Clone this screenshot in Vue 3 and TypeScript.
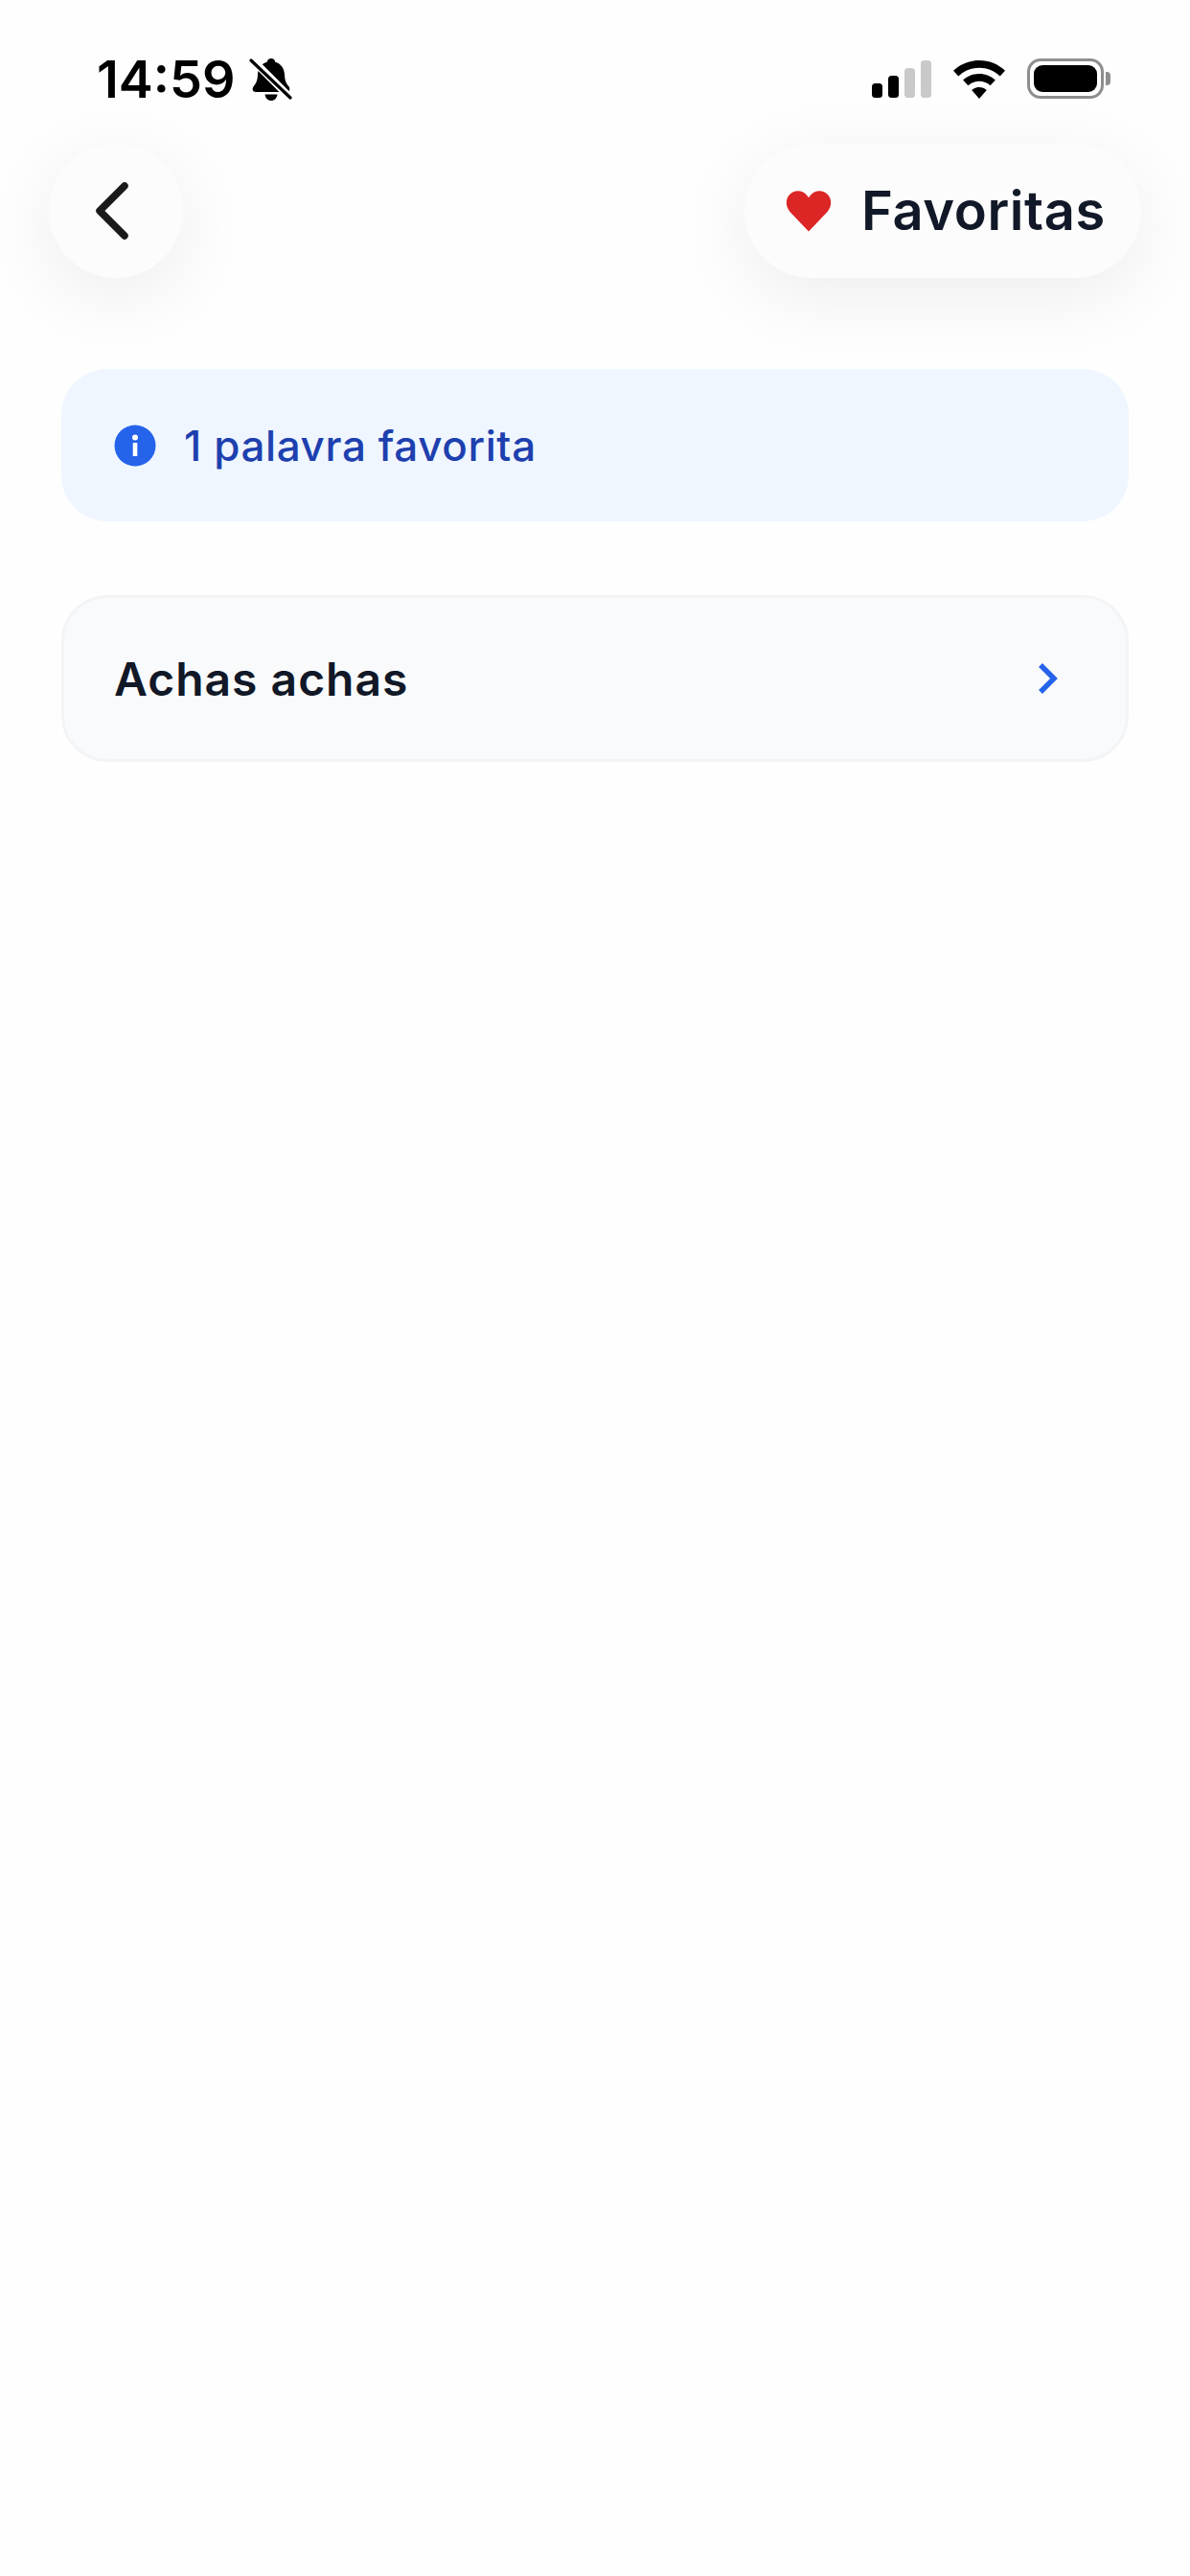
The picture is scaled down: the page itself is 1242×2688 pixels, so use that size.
<template>
  <div class="screen">
    <!-- iOS status bar -->
    <div class="status-bar">
      <div class="status-left">
        <span class="time">14:59</span>
        <svg class="bell" width="46" height="46" viewBox="0 0 46 46">
          <path d="M23 1c2.400 0 4 1.700 4.300 3.800 6 1.700 9.300 6.700 9.700 13 .3 5 .8 8.200 4 12 2.400 2.900 1.600 6.200-2.300 6.200H7.300c-3.900 0-4.700-3.300-2.300-6.200 3.200-3.800 3.700-7 4-12 .4-6.300 3.700-11.300 9.700-13C19 2.700 20.600 1 23 1z" fill="#000" />
          <path d="M16.500 38.500h13c-.4 3.800-3.100 6.500-6.500 6.500s-6.100-2.700-6.500-6.500z" fill="#000" />
          <path d="M3 2l40 40" stroke="#fff" stroke-width="8" />
          <path d="M2 3l41 39" stroke="#000" stroke-width="3.200" stroke-linecap="round" />
        </svg>
      </div>
      <div class="status-right">
        <div class="signal">
          <span v-for="bar in signalBars" :key="bar.height" class="signal-bar" :class="{ off: bar.off }" :style="{ height: bar.height + 'px' }"></span>
        </div>
        <svg width="54" height="40" viewBox="0 0 54 40">
          <path d="M27 0c10.400 0 19.800 4 27 10.700l-5.300 5.700C42.900 11 35.300 7.800 27 7.800S11.100 11 5.300 16.400L0 10.700C7.200 4 16.600 0 27 0z" fill="#000" />
          <path d="M27 14c6.500 0 12.400 2.500 16.900 6.600l-5.300 5.700C35.500 23.500 31.400 21.800 27 21.800s-8.500 1.700-11.600 4.500l-5.300-5.700C14.600 16.500 20.500 14 27 14z" fill="#000" />
          <path d="M27 28c3 0 5.700 1.100 7.800 3L27 40l-7.800-9c2.100-1.900 4.800-3 7.800-3z" fill="#000" />
        </svg>
        <div class="battery">
          <div class="battery-body"><div class="battery-fill"></div></div>
          <div class="battery-tip"></div>
        </div>
      </div>
    </div>

    <!-- Floating nav -->
    <div class="nav">
      <button class="back-btn">
        <svg width="42" height="66" viewBox="0 0 42 66">
          <path d="M34 7L8 33l26 26" fill="none" stroke="#1a1a1a" stroke-width="7.500" stroke-linecap="round" stroke-linejoin="round" />
        </svg>
      </button>
      <div class="title-pill">
        <svg width="48" height="44" viewBox="0 0 50 46">
          <path d="M25 45.500L5 24.500C-.500 18.500-.500 10.500 4 5.500c5-5.500 14-5.500 19 .5l2 2.500 2-2.500c5-6 14-6 19-.5 4.500 5 4.500 13-1 19L25 45.500z" fill="#dc2626" />
        </svg>
        <span class="title">Favoritas</span>
      </div>
    </div>

    <div class="content">
      <div class="count-box">
        <svg width="44" height="44" viewBox="0 0 44 44">
          <circle cx="22" cy="22" r="21.500" fill="#2563eb" />
          <circle cx="22" cy="13.500" r="3" fill="#fff" />
          <rect x="19.700" y="19" width="4.600" height="14" fill="#fff" />
        </svg>
        <span class="count-text">{{ favoriteCount }} palavra favorita</span>
      </div>

      <div v-for="word in words" :key="word" class="word-card">
        <span class="word">{{ word }}</span>
        <svg width="24" height="36" viewBox="0 0 24 36">
          <path d="M5 4l14 14L5 32" fill="none" stroke="#2563eb" stroke-width="5.500" />
        </svg>
      </div>
    </div>
  </div>
</template>

<script setup lang="ts">
const signalBars = [
  { height: 15, off: false },
  { height: 23, off: false },
  { height: 31, off: true },
  { height: 39, off: true },
];

const words = ['Achas achas'];
const favoriteCount = words.length;
</script>

<style scoped>
.screen {
  width: 1242px;
  min-height: 2688px;
  background: #fefefe;
  font-family: Inter, "Liberation Sans", sans-serif;
  overflow: hidden;
}

.status-bar {
  height: 150px;
  box-sizing: border-box;
  padding: 60px 83px 0 101px;
  display: flex;
  justify-content: space-between;
  align-items: flex-start;
}

.status-left {
  display: flex;
  align-items: center;
  gap: 14px;
}

.time {
  font-size: 54px;
  line-height: 46px;
  font-weight: 600;
  color: #000;
}

.status-right {
  display: flex;
  align-items: flex-end;
  height: 43px;
  gap: 23px;
}

.signal {
  display: flex;
  align-items: flex-end;
  gap: 6px;
  margin-bottom: 1px;
}

.signal-bar {
  width: 11px;
  border-radius: 3.500px;
  background: #000;
}

.signal-bar.off {
  background: #c9c9c9;
}

.battery {
  display: flex;
  align-items: center;
  gap: 2px;
}

.battery-body {
  width: 80px;
  height: 42px;
  box-sizing: border-box;
  border: 3px solid #8e8e8e;
  border-radius: 14px;
  padding: 4px;
}

.battery-fill {
  width: 100%;
  height: 100%;
  background: #000;
  border-radius: 9px;
}

.battery-tip {
  width: 5px;
  height: 14px;
  background: #8e8e8e;
  border-radius: 0 4px 4px 0;
}

.nav {
  display: flex;
  justify-content: space-between;
  padding: 0 51px;
}

.back-btn {
  width: 140px;
  height: 140px;
  padding: 0 8px 0 0;
  border: none;
  border-radius: 50%;
  background: #fcfcfc;
  box-shadow: 0 18px 80px rgba(0, 0, 0, 0.07);
  display: flex;
  align-items: center;
  justify-content: center;
}

.title-pill {
  height: 140px;
  width: 414px;
  box-sizing: border-box;
  padding-left: 43px;
  border-radius: 70px;
  background: #fcfcfc;
  box-shadow: 0 18px 80px rgba(0, 0, 0, 0.07);
  display: flex;
  align-items: center;
  gap: 31px;
}

.title {
  font-size: 56px;
  font-weight: 600;
  letter-spacing: 0.6px;
  color: #111827;
  white-space: nowrap;
}

.content {
  padding: 95px 64px 0;
  display: flex;
  flex-direction: column;
  gap: 77px;
}

.count-box {
  height: 159px;
  box-sizing: border-box;
  padding: 0 55px;
  border-radius: 48px;
  background: #eff6ff;
  display: flex;
  align-items: center;
  gap: 29px;
}

.count-text {
  font-size: 44px;
  font-weight: 500;
  letter-spacing: 0.6px;
  color: #1e40af;
}

.word-card {
  height: 174px;
  box-sizing: border-box;
  padding: 0 70px 0 52px;
  border: 3px solid #f3f4f6;
  border-radius: 48px;
  background: #f9fafb;
  display: flex;
  align-items: center;
  justify-content: space-between;
}

.word {
  font-size: 48px;
  font-weight: 600;
  letter-spacing: 1px;
  color: #111827;
}
</style>

<style>
body {
  background: #fefefe;
}
</style>
